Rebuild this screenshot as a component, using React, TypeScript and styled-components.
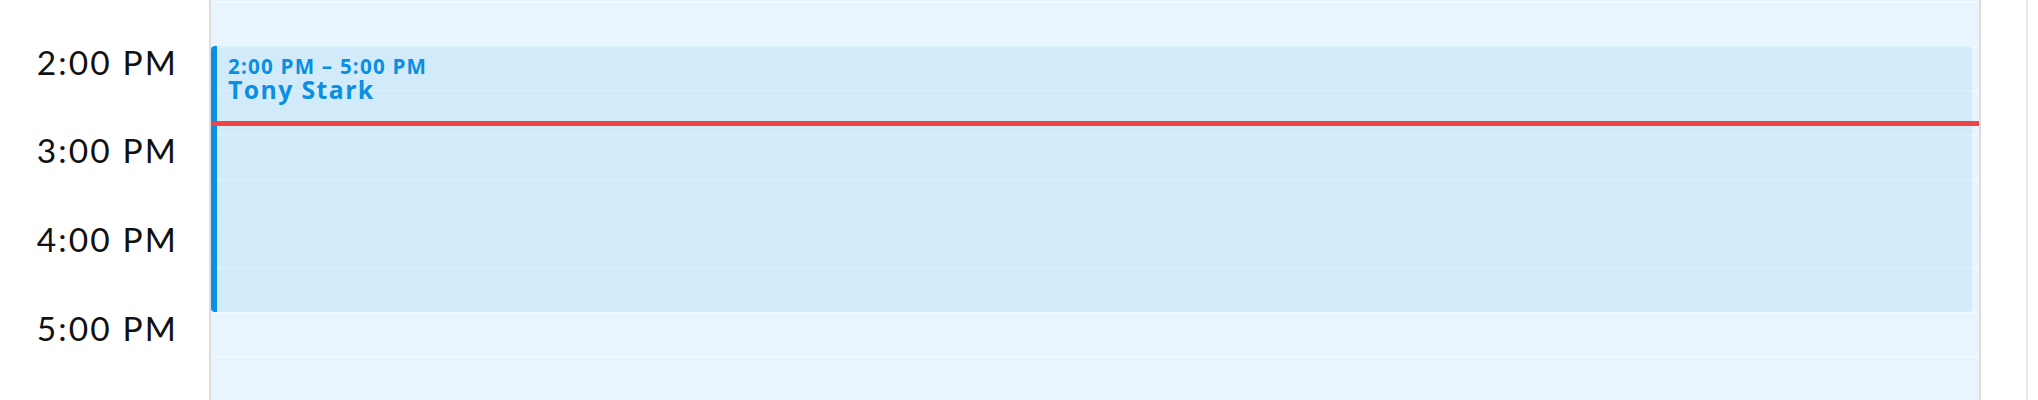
import styled, { createGlobalStyle } from 'styled-components';

const GlobalStyle = createGlobalStyle`
  html, body {
    margin: 0;
    padding: 0;
    background: #fff;
  }
  body {
    font-family: 'Lato', 'Liberation Sans', sans-serif;
  }
`;

const SLOT = 44.333;
const OFFSET = 1.333;

const Calendar = styled.div`
  display: flex;
  flex-direction: row;
  height: 400px;
  overflow: hidden;
`;

const Axis = styled.div`
  display: flex;
  flex-direction: column;
  flex-shrink: 0;
  width: 209px;
  padding-top: ${OFFSET}px;
`;

const AxisSlot = styled.div`
  flex-shrink: 0;
  height: ${SLOT}px;
  box-sizing: border-box;
  padding-right: 31px;
  text-align: right;
`;

const TimeLabel = styled.div`
  font-family: 'Lato', 'Liberation Sans', sans-serif;
  font-weight: 400;
  font-size: 33.5px;
  line-height: 32px;
  color: #111;
  letter-spacing: 2.1px;
  white-space: nowrap;
`;

const DayColumn = styled.div`
  position: relative;
  flex: 1;
  display: flex;
  flex-direction: column;
  padding-top: ${OFFSET}px;
  background: #e8f5fe;
  border-left: 2px solid #dcdcdc;
  border-right: 2px solid #dcdcdc;
`;

const SlotLine = styled.div`
  flex-shrink: 0;
  height: ${SLOT}px;
  box-sizing: border-box;
  border-top: 2px solid #f2f8fd;
`;

const Event = styled.div<{ $top: number; $height: number }>`
  position: absolute;
  top: ${(p) => p.$top}px;
  height: ${(p) => p.$height}px;
  left: 0;
  right: 7px;
  box-sizing: border-box;
  padding: 9.3px 11px 0;
  background: rgba(14, 144, 226, 0.1);
  border-left: 6px solid #0b8fe3;
  border-radius: 4px;
  color: #0b8fe3;
  font-family: 'Open Sans', 'Liberation Sans', sans-serif;
`;

const EventTime = styled.div`
  font-weight: 700;
  font-size: 20.6px;
  line-height: 22px;
  letter-spacing: 1.2px;
  white-space: nowrap;
`;

const EventTitle = styled.div`
  font-weight: 700;
  font-size: 24.8px;
  line-height: 25.4px;
  letter-spacing: 1.4px;
  white-space: nowrap;
`;

const NowIndicator = styled.div<{ $top: number }>`
  position: absolute;
  top: ${(p) => p.$top}px;
  left: 0;
  right: 0;
  height: 4.6px;
  background: #ef4444;
`;

const Gutter = styled.div`
  flex-shrink: 0;
  width: 45px;
  border-right: 2px solid #e6e7eb;
  margin-right: 10px;
`;

const slots = [
  { time: '1:30' },
  { time: '2:00', label: '2:00 PM' },
  { time: '2:30' },
  { time: '3:00', label: '3:00 PM' },
  { time: '3:30' },
  { time: '4:00', label: '4:00 PM' },
  { time: '4:30' },
  { time: '5:00', label: '5:00 PM' },
  { time: '5:30' },
  { time: '6:00' },
];

export default function App() {
  return (
    <>
      <GlobalStyle />
      <Calendar>
        <Axis>
          {slots.map((s) => (
            <AxisSlot key={s.time}>{s.label && <TimeLabel>{s.label}</TimeLabel>}</AxisSlot>
          ))}
        </Axis>
        <DayColumn>
          {slots.map((s) => (
            <SlotLine key={s.time} />
          ))}
          <Event $top={OFFSET + SLOT} $height={SLOT * 6}>
            <EventTime>2:00 PM – 5:00 PM</EventTime>
            <EventTitle>Tony Stark</EventTitle>
          </Event>
          <NowIndicator $top={121.3} />
        </DayColumn>
        <Gutter />
      </Calendar>
    </>
  );
}
